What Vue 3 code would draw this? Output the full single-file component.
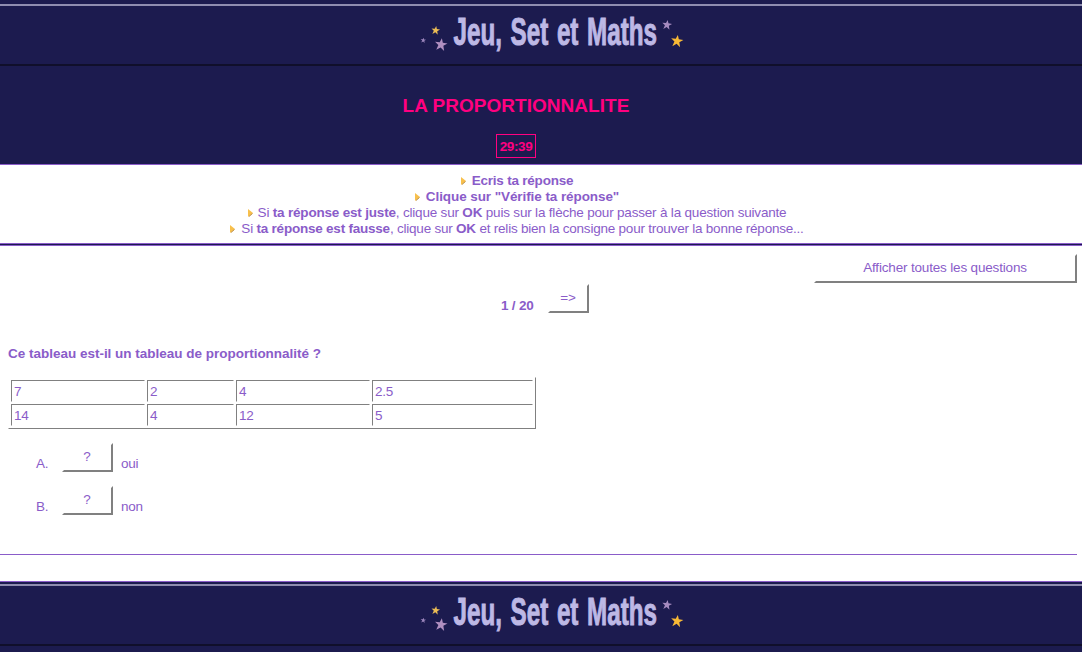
<script setup>
const star = 'M0-6 1.5-2 6-1.8 2.4.9 3.8 5.6 0 2.8-3.8 5.6-2.4.9-6-1.8-1.5-2Z'
const banners = ['header', 'footer']
const stars = [
  { x: 423.3, y: 40.3, s: 0.45, c: '#9c86bd' },
  { x: 435.6, y: 30.3, s: 0.72, c: '#ecbd55' },
  { x: 441, y: 44.5, s: 1.05, c: '#b08fc0' },
  { x: 667, y: 24.8, s: 0.82, c: '#a58abf' },
  { x: 677, y: 41, s: 1.03, c: '#f8b936' }
]
const rules = [
  [['b', 'Ecris ta réponse']],
  [['b', 'Clique sur "Vérifie ta réponse"']],
  [['span', 'Si '], ['b', 'ta réponse est juste'], ['span', ', clique sur '], ['b', 'OK'], ['span', ' puis sur la flèche pour passer à la question suivante']],
  [['span', 'Si '], ['b', 'ta réponse est fausse'], ['span', ', clique sur '], ['b', 'OK'], ['span', ' et relis bien la consigne pour trouver la bonne réponse...']]
]
const rows = [['7', '2', '4', '2.5'], ['14', '4', '12', '5']]
const answers = [['A.', 'oui'], ['B.', 'non']]
</script>

<template>
  <div class="page">
    <template v-for="b in banners" :key="b">
      <component :is="b" class="banner" :class="b">
        <svg width="1082" height="60" viewBox="0 4 1082 60">
          <rect y="4" width="1082" height="2" fill="#8f8db0" />
          <path v-for="(s, i) in stars" :key="i" :d="star" :fill="s.c"
                :transform="`translate(${s.x} ${s.y}) rotate(8) scale(${s.s})`" />
          <text x="453.5" y="45" textLength="203.5" lengthAdjust="spacingAndGlyphs">Jeu, Set et Maths</text>
        </svg>
      </component>

      <main v-if="b === 'header'">
        <section class="heading">
          <h1>LA PROPORTIONNALITE</h1>
          <div class="timer">29:39</div>
        </section>

        <section class="rules">
          <p v-for="(r, i) in rules" :key="i" :class="'r' + (i + 1)"><svg class="arrow" width="5" height="8"><path d="M0 0 5 4 0 8Z" fill="#f8c04c" /><path d="M4.5 4.5 1 7.5" stroke="#a8762c" stroke-width=".8" /></svg><component :is="s[0]" v-for="(s, j) in r" :key="j">{{ s[1] }}</component></p>
        </section>

        <div class="tools"><button class="all">Afficher toutes les questions</button></div>
        <div class="nav"><b>1 / 20</b><button class="next">=&gt;</button></div>

        <section class="question">
          <h2>Ce tableau est-il un tableau de proportionnalité ?</h2>
          <div class="table">
            <template v-for="(r, i) in rows" :key="i">
              <div v-for="(c, j) in r" :key="j" class="cell">{{ c }}</div>
            </template>
          </div>
          <div class="answers">
            <div v-for="a in answers" :key="a[0]" class="answer">
              <span class="letter">{{ a[0] }}</span>
              <button class="choice">?</button>
              <span>{{ a[1] }}</span>
            </div>
          </div>
        </section>
        <div class="divider"></div>
      </main>
    </template>
  </div>
</template>

<style>
body { margin: 0; background: #fff; }
</style>

<style scoped>
* { box-sizing: border-box; }
.page {
  width: 1082px; height: 652px; overflow: hidden;
  font: 13.5px/16px "Liberation Sans", Arial, sans-serif;
  letter-spacing: -.22px;
  color: #8a5cc9;
}
.banner { background: #1c1b4f; }
.header { height: 66px; padding-top: 4px; border-bottom: 2px solid #100f2b; }
.footer { height: 71px; border-top: 1px solid #8a5cc9; padding-top: 2px; }
.footer::after { content: ''; display: block; height: 2px; background: #100f2b; }
.banner svg { display: block; }
.banner text {
  font: bold 38px "Liberation Sans", Arial, sans-serif; letter-spacing: 0; word-spacing: 3px;
  fill: #bdb8e5; stroke: #bdb8e5; stroke-width: 1px;
}
.heading {
  height: 99px; background: #1c1b4f; color: #ff0080;
  border-bottom: 1px solid #8a5cc9; padding: 28px 50px 0 0;
  display: flex; flex-direction: column; align-items: center;
}
h1 { margin: 0; font-size: 19px; line-height: 24px; letter-spacing: .03px; }
.timer {
  margin-top: 16px; width: 40px; height: 24px; border: 1px solid #ff0080;
  font-weight: bold; line-height: 23px; text-align: center; letter-spacing: -.4px;
}
.rules {
  height: 81px; padding: 8px 48px 0 0; border-bottom: 1px solid #8a5cc9;
  box-shadow: inset 0 -1px #1c1b4f, inset 0 -2px #8a5cc9;
}
.rules p { margin: 0; height: 16px; text-align: center; white-space: pre; }
.rules .r2 { letter-spacing: -.08px; }
.rules .r3 { letter-spacing: -.19px; }
.arrow { margin-right: 6px; vertical-align: 0; }
.r3 .arrow { margin-right: 5px; }
button {
  font: inherit; letter-spacing: inherit; color: inherit; background: #fff; padding: 0 1px 1px 0; height: 29px;
  border: 2px solid; border-color: #fff #808080 #808080 #fff; border-radius: 0;
}
.tools { padding: 8px 5px 0 0; display: flex; justify-content: flex-end; }
.all { width: 263px; letter-spacing: -.17px; }
.nav { display: flex; padding: 1px 0 0 501px; height: 63px; }
.nav b { width: 47px; padding-top: 14px; }
.next { width: 41px; }
.question { padding: 0 8px; height: 208px; }
h2 { margin: 0; font-size: 13.5px; line-height: 16px; letter-spacing: -.01px; }
.table {
  margin-top: 15px; width: 528px; height: 52px; padding: 2px;
  border: 1px solid; border-color: #fff #808080 #808080 #fff;
  display: grid; grid-template-columns: 134px 87px 134px 161px; grid-auto-rows: 22px; gap: 2px;
}
.cell { border: 1px solid; border-color: #808080 #fff #fff #808080; padding: 3px 0 0 2px; }
.answers { padding: 14px 0 0 28px; display: grid; gap: 14px; }
.answer { display: flex; height: 29px; }
.answer span { padding-top: 13px; }
.letter { width: 26px; }
.choice { width: 51px; margin-right: 8px; }
.divider { height: 1px; width: 1077px; background: #8a5cc9; margin-bottom: 26px; }
</style>
